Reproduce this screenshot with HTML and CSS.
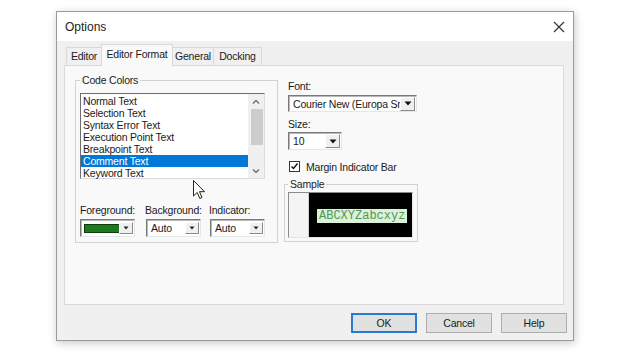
FILE: index.html
```html
<!DOCTYPE html>
<html lang="en">
<head>
    <meta charset="UTF-8">
    <title>Options</title>
    <link rel="stylesheet" href="styles.css">
</head>
<body>
    <div class="dialog">
        <div class="titlebar">
            <span class="title">Options</span>
            <svg class="close" width="12" height="12" viewBox="0 0 12 12">
                <path d="M1 1 L11 11 M11 1 L1 11" stroke="#333" stroke-width="1.2" fill="none"/>
            </svg>
        </div>
        <div class="client">
            <div class="tabs">
                <div class="tab tab-editor">Editor</div>
                <div class="tab tab-format active">Editor Format</div>
                <div class="tab tab-general">General</div>
                <div class="tab tab-docking">Docking</div>
            </div>
            <div class="page">
                <fieldset class="group colors">
                    <legend>Code Colors</legend>
                    <div class="listbox">
                        <ul class="items">
                            <li>Normal Text</li>
                            <li>Selection Text</li>
                            <li>Syntax Error Text</li>
                            <li>Execution Point Text</li>
                            <li>Breakpoint Text</li>
                            <li class="selected">Comment Text</li>
                            <li>Keyword Text</li>
                        </ul>
                        <div class="scrollbar">
                            <svg class="chev" width="16" height="10" viewBox="0 0 16 10">
                                <path d="M5 6.5 L8 3.5 L11 6.5" stroke="#606060" stroke-width="1.2" fill="none"/>
                            </svg>
                            <div class="track"><div class="thumb"></div></div>
                            <svg class="chev" width="16" height="10" viewBox="0 0 16 10">
                                <path d="M5 3.5 L8 6.5 L11 3.5" stroke="#606060" stroke-width="1.2" fill="none"/>
                            </svg>
                        </div>
                    </div>
                    <div class="pickers">
                        <div class="picker">
                            <div class="label">Foreground:</div>
                            <div class="combo color-combo">
                                <div class="value"><span class="swatch"></span></div>
                                <div class="drop small"><svg width="6" height="4" viewBox="0 0 6 4"><path d="M0.5 0.5 H5.5 L3 3.5 Z" fill="#222"/></svg></div>
                            </div>
                        </div>
                        <div class="picker">
                            <div class="label">Background:</div>
                            <div class="combo color-combo">
                                <div class="value">Auto</div>
                                <div class="drop small"><svg width="6" height="4" viewBox="0 0 6 4"><path d="M0.5 0.5 H5.5 L3 3.5 Z" fill="#222"/></svg></div>
                            </div>
                        </div>
                        <div class="picker">
                            <div class="label">Indicator:</div>
                            <div class="combo color-combo">
                                <div class="value">Auto</div>
                                <div class="drop small"><svg width="6" height="4" viewBox="0 0 6 4"><path d="M0.5 0.5 H5.5 L3 3.5 Z" fill="#222"/></svg></div>
                            </div>
                        </div>
                    </div>
                </fieldset>

                <div class="right">
                    <div class="label">Font:</div>
                    <div class="combo font-combo">
                        <div class="value">Courier New (Europa Src</div>
                        <div class="drop"><svg width="8" height="5" viewBox="0 0 8 5"><path d="M0.5 0.5 H7.5 L4 4.5 Z" fill="#111"/></svg></div>
                    </div>
                    <div class="label">Size:</div>
                    <div class="combo size-combo">
                        <div class="value">10</div>
                        <div class="drop"><svg width="8" height="5" viewBox="0 0 8 5"><path d="M0.5 0.5 H7.5 L4 4.5 Z" fill="#111"/></svg></div>
                    </div>
                    <div class="check">
                        <span class="box">
                            <svg width="9" height="9" viewBox="0 0 9 9"><path d="M1.5 4.5 L3.5 6.5 L7.5 1.5" stroke="#111" stroke-width="1.4" fill="none"/></svg>
                        </span>
                        <span>Margin Indicator Bar</span>
                    </div>
                    <fieldset class="group sample">
                        <legend>Sample</legend>
                        <div class="sample-box">
                            <div class="margin-strip"></div>
                            <div class="code"><span class="code-text">ABCXYZabcxyz</span></div>
                        </div>
                    </fieldset>
                </div>
            </div>
            <div class="buttons">
                <button class="btn default">OK</button>
                <button class="btn">Cancel</button>
                <button class="btn">Help</button>
            </div>
        </div>
    </div>

    <svg class="cursor" width="13" height="20" viewBox="0 0 13 20">
        <path d="M0.5 0.5 L0.5 16 L4.2 12.5 L6.8 18.5 L9 17.5 L6.5 11.7 L11.5 11.7 Z" fill="#fff" stroke="#222" stroke-width="1"/>
    </svg>
</body>
</html>
```

FILE: styles.css
```css
body {
    margin: 0;
    width: 640px;
    height: 360px;
    background: #ffffff;
    font-family: "Liberation Sans", Arial, sans-serif;
    font-size: 10.5px;
    letter-spacing: -0.2px;
    color: #1a1a1a;
    position: relative;
    overflow: hidden;
}
.dialog {
    position: absolute;
    left: 56px;
    top: 11px;
    width: 518px;
    height: 330px;
    box-sizing: border-box;
    border: 1px solid #9a9a9a;
    background: #f0f0f0;
    box-shadow: 1px 2px 8px rgba(0, 0, 0, 0.22);
    display: flex;
    flex-direction: column;
}
.titlebar {
    height: 29px;
    background: #ffffff;
    display: flex;
    align-items: center;
    justify-content: space-between;
    padding: 0 8px 0 8px;
}
.title {
    font-size: 12px;
    letter-spacing: 0;
    color: #222;
}
.client {
    flex: 1;
    padding: 3px 8px 6px 7px;
    display: flex;
    flex-direction: column;
}
.tabs {
    display: flex;
    align-items: flex-end;
    height: 21px;
    padding-left: 2px;
    position: relative;
    z-index: 1;
}
.tab {
    box-sizing: border-box;
    height: 18px;
    line-height: 16px;
    text-align: center;
    white-space: nowrap;
    border: 1px solid #d9d9d9;
    border-bottom: none;
    background: #f0f0f0;
    margin-left: -1px;
}
.tab:first-child {
    margin-left: 0;
}
.tab-editor { width: 36px; }
.tab-format { width: 72px; }
.tab-general { width: 42px; }
.tab-docking { width: 49px; }
.tab.active {
    height: 22px;
    line-height: 18px;
    background: #f9f9f9;
    margin-bottom: -1px;
    padding-bottom: 2px;
}
.page {
    box-sizing: border-box;
    width: 500px;
    height: 240px;
    border: 1px solid #d9d9d9;
    background: #f9f9f9;
    padding: 8px 0 0 10px;
    display: flex;
    gap: 6px;
    align-items: flex-start;
}
.group {
    margin: 0;
    border: 1px solid #d2d2d2;
    padding: 0;
}
.group legend {
    padding: 0 2px;
    margin-left: 0;
    line-height: 13px;
    color: #222;
}
.colors {
    box-sizing: border-box;
    width: 203px;
    height: 169px;
    padding: 6px 12px 0 4px;
}
.listbox {
    box-sizing: border-box;
    height: 86px;
    display: flex;
    background: #ffffff;
    border: 1px solid;
    border-color: #6e6e6e #dcdcdc #dcdcdc #6e6e6e;
}
.items {
    list-style: none;
    margin: 0;
    padding: 1px 0 0 0;
    flex: 1;
}
.items li {
    height: 12px;
    line-height: 12px;
    padding-left: 2px;
    white-space: nowrap;
}
.items li.selected {
    background: #0078d7;
    color: #ffffff;
}
.scrollbar {
    width: 16px;
    background: #f0f0f0;
    display: flex;
    flex-direction: column;
    justify-content: space-between;
    padding: 3px 0 2px;
}
.track {
    flex: 1;
    padding: 2px 1px 0 3px;
}
.thumb {
    height: 36px;
    background: #cdcdcd;
}
.pickers {
    display: grid;
    grid-template-columns: 65px 64px 56px;
    margin-top: 25px;
}
.picker .label {
    line-height: 13px;
    margin-bottom: 2px;
}
.combo {
    box-sizing: border-box;
    display: flex;
    align-items: center;
    background: #ffffff;
    border: 1px solid;
    border-color: #7a7a7a #e6e6e6 #e6e6e6 #7a7a7a;
    box-shadow: inset 1px 1px 0 #b8b8b8;
}
.combo .value {
    flex: 1;
    overflow: hidden;
    white-space: nowrap;
    padding-left: 4px;
}
.color-combo {
    width: 55px;
    height: 18px;
}
.picker + .picker .color-combo {
    margin-left: 1px;
}
.swatch {
    display: block;
    width: 34px;
    height: 7px;
    margin-left: -1px;
    background: #1f7a1f;
    border: 1px solid #0c3d0c;
}
.drop {
    box-sizing: border-box;
    width: 15px;
    height: 14px;
    margin-right: 1px;
    display: flex;
    align-items: center;
    justify-content: center;
    background: #f0f0f0;
    border: 1px solid;
    border-color: #ffffff #8a8a8a #8a8a8a #ffffff;
}
.drop.small {
    width: 14px;
    height: 12px;
}
.right {
    width: 134px;
    padding-top: 6px;
}
.right > .label,
.right > .combo,
.right > .check {
    margin-left: 4px;
}
.right > .label {
    line-height: 13px;
}
.font-combo {
    width: 129px;
    height: 17px;
    margin-top: 2px;
    margin-bottom: 6px;
}
.size-combo {
    width: 54px;
    height: 18px;
    margin-top: 1px;
}
.check {
    display: flex;
    align-items: center;
    gap: 6px;
    margin-top: 10px;
    height: 13px;
}
.check .box {
    box-sizing: border-box;
    width: 11px;
    height: 11px;
    margin-left: 1px;
    border: 1px solid #333;
    background: #ffffff;
    display: flex;
    align-items: center;
    justify-content: center;
}
.sample {
    box-sizing: border-box;
    width: 134px;
    height: 64px;
    margin-top: 5px;
    padding: 1px 4px 0 3px;
}
.sample-box {
    box-sizing: border-box;
    height: 46px;
    display: flex;
    border: 1px solid;
    border-color: #8a8a8a #e6e6e6 #e6e6e6 #8a8a8a;
}
.margin-strip {
    width: 19px;
    background: #f4f4f4;
    border-right: 1px solid #d0d0d0;
}
.code {
    flex: 1;
    background: #000000;
    display: flex;
    align-items: center;
    padding: 1px 0 0 8px;
}
.code-text {
    font-family: "Liberation Mono", "Courier New", monospace;
    font-size: 12px;
    letter-spacing: 0;
    line-height: 14px;
    padding: 0 2px;
    background: #ddf0dc;
    color: #4f9a52;
}
.buttons {
    display: flex;
    justify-content: flex-end;
    gap: 9px;
    margin-top: 8px;
    margin-right: -2px;
}
.btn {
    box-sizing: border-box;
    width: 66px;
    height: 20px;
    font-family: "Liberation Sans", Arial, sans-serif;
    font-size: 10.5px;
    letter-spacing: -0.2px;
    color: #1a1a1a;
    background: #e1e1e1;
    border: 1px solid #adadad;
    padding: 0;
}
.btn.default {
    border: 2px solid #2a7ad2;
}
.cursor {
    position: absolute;
    left: 193px;
    top: 180px;
}
```
